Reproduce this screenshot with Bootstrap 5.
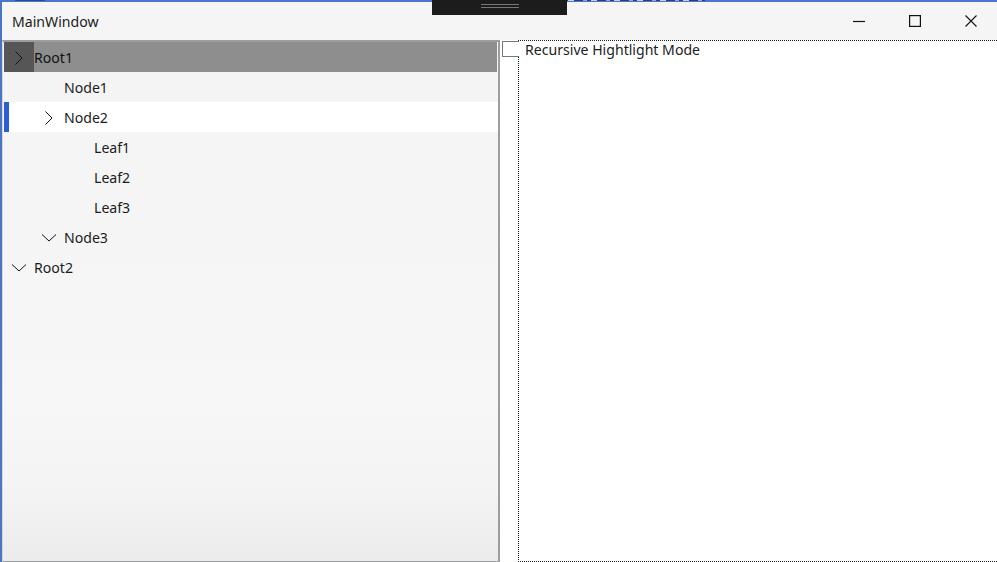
<!DOCTYPE html>
<html lang="en">
<head>
<meta charset="utf-8">
<title>MainWindow</title>
<link href="https://cdn.jsdelivr.net/npm/bootstrap@5.3.0/dist/css/bootstrap.min.css" rel="stylesheet">
<style>
html,body{height:100%;margin:0;overflow:hidden}
body{font-family:"Noto Sans","Open Sans",sans-serif;font-size:14.1px;color:#1c1c1c;background:#f4f4f4}
.win{width:997px;height:562px;border-top:2px solid #4a76d2;border-left:2px solid #4c74c6;background:#f5f5f5;position:relative}
.topgrip{position:absolute;left:430px;top:-2px;width:135px;height:15px;background:#1c1c1c}
.topgrip i{display:block;width:38px;height:1px;background:#777;margin:0 auto 2px auto;position:relative;top:4px}
.topfrag{position:absolute;left:503px;top:-2px;width:200px;height:1px;background:repeating-linear-gradient(90deg,#2c3f70 0 9px,#8fa8e0 9px 13px,#2c3f70 13px 17px,#c7d5f2 17px 23px)}
.topfragl{position:absolute;left:13px;top:-2px;width:30px;height:1px;background:#2b4a90}
.titlebar{height:38px;padding-left:10px}
.wintitle{margin-top:2px}
.capbtns{margin-right:-2px}
.capbtn{width:56px;height:38px}
.panes{height:522px;background:#fff}
.treepane{width:498px;border:1px solid #9a9da2;border-left:1px solid #d8d8d8;border-right-width:2px;border-top-width:2px;padding-left:1px;background:linear-gradient(180deg,#f4f4f4 0%,#f5f5f5 35%,#f7f7f8 70%,#f3f3f4 88%,#ebebec 100%)}
.treerow{height:30px;position:relative;line-height:32px}
.lv0{padding-left:30px}
.lv1{padding-left:60px}
.lv2{padding-left:90px}
.chev{position:absolute;top:8px;width:16px;height:16px}
.lv0 .chev{left:7px}
.lv1 .chev{left:37px}
.hot{background:#8e8e8e;margin-right:1px;color:#111}
.hotcell{position:absolute;left:0;top:0;width:30px;height:30px;background:#565656}
.hot .chev{z-index:1}
.sel{background:#fff}
.sel::before{content:"";position:absolute;left:0;top:0;width:5px;height:30px;background:#2a5fd4}
.rowtext{position:relative}
.gap{width:18px}
.rightpane{width:479px;height:522px;background:#fff;border-top:1px dotted #222;border-left:1px dotted #222;border-bottom:1px dotted #222;position:relative}
.chkwrap{position:absolute;left:-17px;top:0;white-space:nowrap}
.chkbox{display:inline-block;width:17px;height:16px;background:#fff;border:1px solid #777;border-right:0;vertical-align:top;margin-right:6px}
.chktext{display:inline-block;vertical-align:top;line-height:18px}
</style>
</head>
<body>
<div class="win d-flex flex-column">
  <div class="topfragl"></div>
  <div class="topfrag"></div>
  <div class="topgrip"><i></i><i></i></div>
  <div class="titlebar d-flex align-items-center justify-content-between">
    <span class="wintitle">MainWindow</span>
    <div class="capbtns d-flex">
      <div class="capbtn d-flex align-items-center justify-content-center"><svg width="14" height="14" viewBox="0 0 14 14"><path d="M1 7.5H13" stroke="#111" stroke-width="1.2" fill="none"/></svg></div>
      <div class="capbtn d-flex align-items-center justify-content-center"><svg width="14" height="14" viewBox="0 0 14 14"><rect x="1.6" y="1.6" width="10.8" height="10.8" stroke="#111" stroke-width="1.2" fill="none"/></svg></div>
      <div class="capbtn d-flex align-items-center justify-content-center"><svg width="14" height="14" viewBox="0 0 14 14"><path d="M1.5 1.5L12.5 12.5M12.5 1.5L1.5 12.5" stroke="#111" stroke-width="1.1" fill="none"/></svg></div>
    </div>
  </div>
  <div class="panes d-flex">
    <div class="treepane">
      <div class="treerow lv0 hot"><div class="hotcell"></div><svg class="chev" viewBox="0 0 16 16"><path d="M4.5 1.5L11 8L4.5 14.5" stroke="#111" stroke-width="1" fill="none"/></svg><span class="rowtext">Root1</span></div>
      <div class="treerow lv1">Node1</div>
      <div class="treerow lv1 sel"><svg class="chev" viewBox="0 0 16 16"><path d="M4.5 1.5L11 8L4.5 14.5" stroke="#111" stroke-width="1" fill="none"/></svg><span class="rowtext">Node2</span></div>
      <div class="treerow lv2">Leaf1</div>
      <div class="treerow lv2">Leaf2</div>
      <div class="treerow lv2">Leaf3</div>
      <div class="treerow lv1"><svg class="chev" viewBox="0 0 16 16"><path d="M1 4.5L8 11L15 4.5" stroke="#111" stroke-width="1" fill="none"/></svg><span class="rowtext">Node3</span></div>
      <div class="treerow lv0"><svg class="chev" viewBox="0 0 16 16"><path d="M1 4.5L8 11L15 4.5" stroke="#111" stroke-width="1" fill="none"/></svg><span class="rowtext">Root2</span></div>
    </div>
    <div class="gap"></div>
    <div class="rightpane">
      <div class="chkwrap"><span class="chkbox"></span><span class="chktext">Recursive Hightlight Mode</span></div>
    </div>
  </div>
</div>
<script src="https://cdn.jsdelivr.net/npm/bootstrap@5.3.0/dist/js/bootstrap.bundle.min.js"></script>
</body>
</html>
